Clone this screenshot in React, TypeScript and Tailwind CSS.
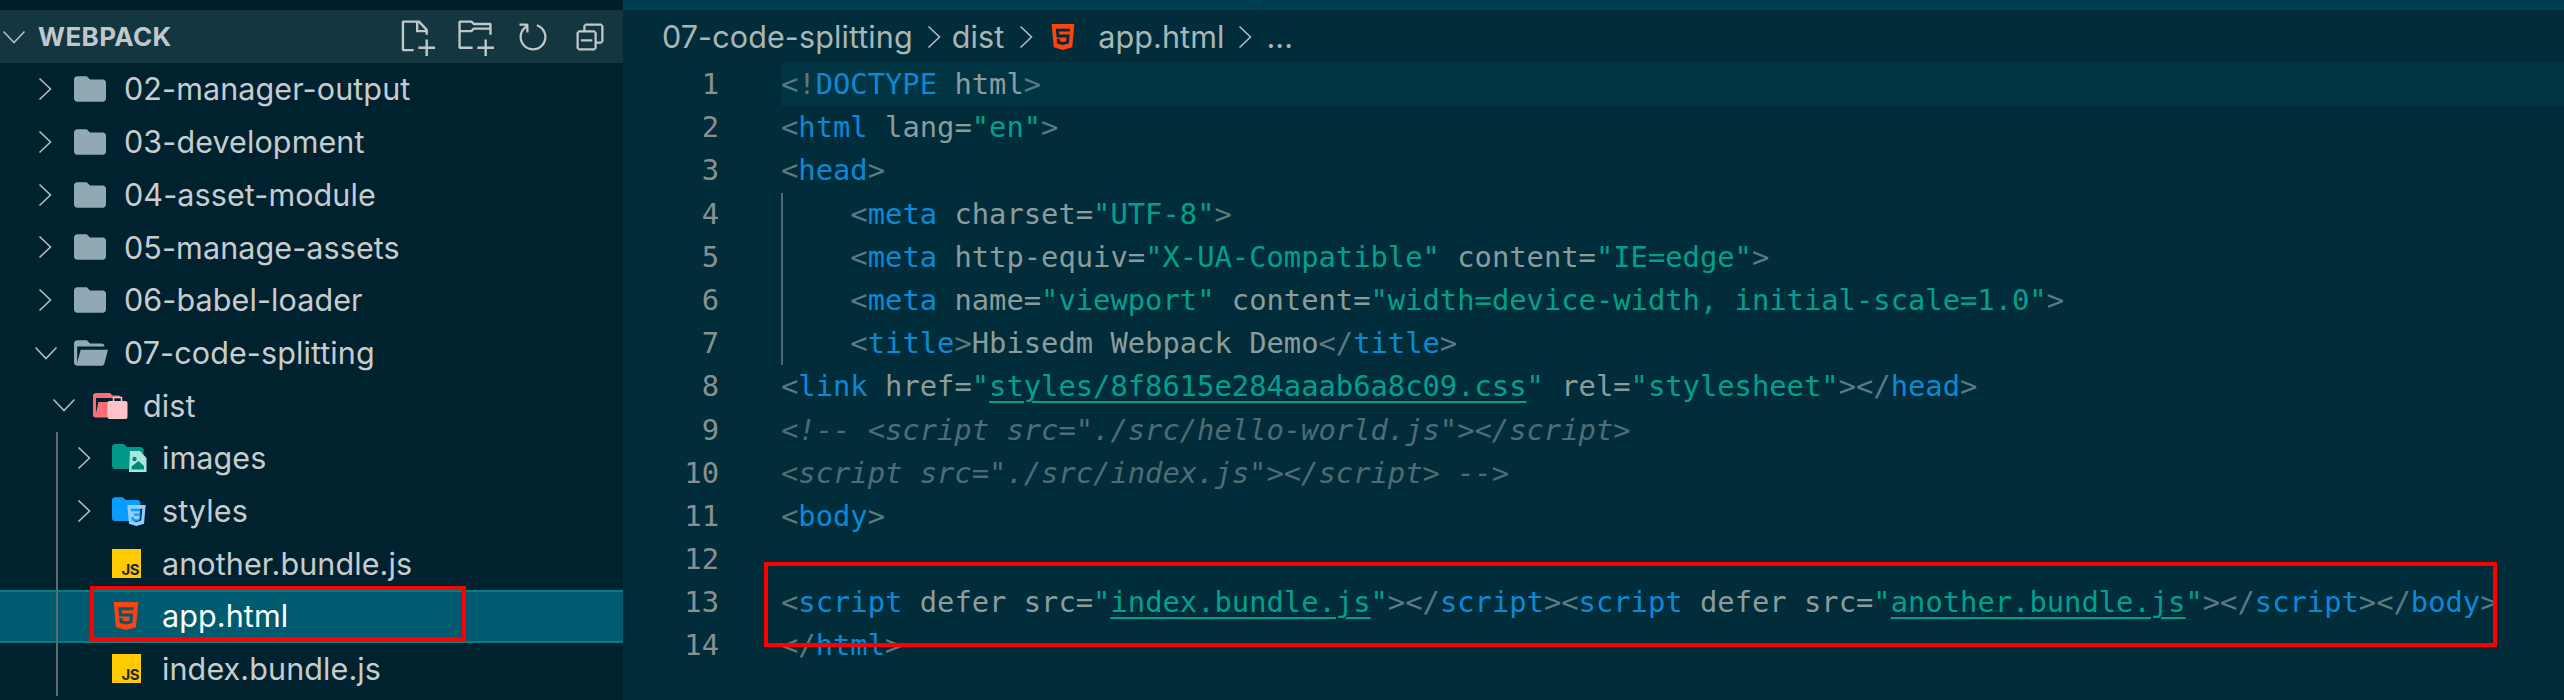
import type { ReactNode } from "react";
import { SiCss3, SiHtml5 } from "react-icons/si";
import { VscCollapseAll, VscNewFile, VscNewFolder, VscRefresh } from "react-icons/vsc";

function ChevronRight({ className = "" }: { className?: string }) {
  return (
    <svg viewBox="0 0 14 24" className={"h-[24px] w-[14px] shrink-0 " + className} fill="none" stroke="#b4bcbe" strokeWidth="1.6">
      <path d="M1.5 1.5 12.5 12 1.5 22.5" />
    </svg>
  );
}

function ChevronDown({ className = "" }: { className?: string }) {
  return (
    <svg viewBox="0 0 24 14" className={"h-[14px] w-[24px] shrink-0 " + className} fill="none" stroke="#b4bcbe" strokeWidth="1.6">
      <path d="M1.5 1.5 12 12.5 22.5 1.5" />
    </svg>
  );
}

function FolderIcon() {
  return (
    <svg viewBox="2 4 20 16" className="h-[26px] w-[32px]" fill="#90a9b4">
      <path d="M10 4H4c-1.11 0-2 .89-2 2v12c0 1.097.903 2 2 2h16c1.097 0 2-.903 2-2V8c0-1.11-.9-2-2-2h-8l-2-2z" />
    </svg>
  );
}

function OpenFolderIcon() {
  return (
    <svg viewBox="2 4 21.2 16" className="h-[26px] w-[34px]" fill="#90a9b4">
      <path d="M19 20H4c-1.11 0-2-.9-2-2V6c0-1.11.89-2 2-2h6l2 2h7a2 2 0 0 1 2 2H4v10l2.14-8h17.07l-2.28 8.5c-.23.87-1.01 1.5-1.93 1.5z" />
    </svg>
  );
}

function DistIcon() {
  return (
    <svg viewBox="0 0 35 28" className="h-[28px] w-[35px]">
      <path fill="#ff6e75" d="M17 2H3C1.4 2 0 3 0 5v19c0 1.5 1.2 2.4 2.6 2.4H16V11H5.5L3 22V7h24.6c0-1.6-1-2.4-2.4-2.4H19.5z" />
      <path fill="#ff6e75" d="M5.5 11H28v4H4.5z" />
      <rect x="14.5" y="10" width="20" height="18" rx="2" fill="#ffc4c9" />
      <path d="M20.5 10V6.6h8V10" fill="none" stroke="#ffc4c9" strokeWidth="1.5" />
    </svg>
  );
}

function ImagesIcon() {
  return (
    <svg viewBox="0 0 35 28" className="h-[28px] w-[35px]">
      <path fill="#009688" d="M12 0H3C1.3 0 0 1.3 0 3v19c0 1.7 1.3 3 3 3h18V7h10.500V6c0-1.500-1.300-3-3-3H15z" />
      <path fill="#009688" d="M20 5h11.500v8H20z" />
      <path fill="#a7e6da" d="M18 7h10l6.500 7v14H17z" />
      <path fill="#00897b" d="M19.500 25.500v-3l7-5.500 5.500 5v3.500z" />
      <circle cx="22.500" cy="15" r="2.200" fill="#00897b" />
    </svg>
  );
}

function StylesIcon() {
  return (
    <div className="relative h-[28px] w-[35px]">
      <svg viewBox="0 0 35 28" className="h-[26px] w-[32px]">
        <path fill="#0a9dff" d="M12 0H3C1.300 0 0 1.300 0 3v20c0 1.700 1.300 3 3 3h25c1.700 0 3-1.300 3-3V6c0-1.700-1.300-3-3-3H15z" />
      </svg>
      <SiCss3 className="absolute right-0 top-[7px] h-[23px] w-[21px] text-[#90d0ff]" />
    </div>
  );
}

function JsIcon() {
  return (
    <div className="flex h-[29px] w-[29px] items-end justify-end bg-[#ffca00] pb-[1px] pr-[2px] font-['Inter',sans-serif] text-[15px] leading-[15px] font-bold tracking-[-0.5px] text-[#1c2a33]">
      JS
    </div>
  );
}

function Html5Icon({ className }: { className: string }) {
  return <SiHtml5 className={className + " text-[#fc4410]"} />;
}

function Row({
  depth,
  chevron,
  icon,
  label,
  selected,
}: {
  depth: number;
  chevron?: "right" | "down";
  icon: ReactNode;
  label: string;
  selected?: boolean;
}) {
  const padding = ["pl-[38px]", "pl-[34px]", "pl-[52px]", "pl-[77px]"][depth];
  return (
    <div
      className={
        "flex h-[52.7px] items-center text-[30.5px] tracking-[0.1px] " +
        padding +
        (selected ? " border-y-[2px] border-[#007f80] bg-[#005a70] text-white" : " text-[#c8ccce]")
      }
    >
      <div className={depth === 3 ? "w-[35px] shrink-0" : depth === 2 ? "w-[41px] shrink-0" : depth === 1 ? "w-[40px] shrink-0" : "w-[36px] shrink-0"}>
        {chevron === "right" && <ChevronRight />}
        {chevron === "down" && <ChevronDown />}
      </div>
      <div className="flex w-[50px] shrink-0 items-center">{icon}</div>
      <span className="whitespace-nowrap">{label}</span>
    </div>
  );
}

const T = ({ children }: { children: ReactNode }) => <span className="text-[#0a8ad4]">{children}</span>;
const P = ({ children }: { children: ReactNode }) => <span className="text-[#5b7a7f]">{children}</span>;
const A = ({ children }: { children: ReactNode }) => <span className="text-[#8b9c9d]">{children}</span>;
const S = ({ children }: { children: ReactNode }) => <span className="text-[#00a08f]">{children}</span>;
const L = ({ children }: { children: ReactNode }) => (
  <span className="text-[#00a08f] underline decoration-[#00a08f] decoration-[2px] underline-offset-[5px]">{children}</span>
);
const C = ({ children }: { children: ReactNode }) => <span className="text-[#4f6c72] italic">{children}</span>;

const lines: ReactNode[] = [
  <><P>&lt;!</P><T>DOCTYPE</T> <A>html</A><P>&gt;</P></>,
  <><P>&lt;</P><T>html</T> <A>lang=</A><S>"en"</S><P>&gt;</P></>,
  <><P>&lt;</P><T>head</T><P>&gt;</P></>,
  <>    <P>&lt;</P><T>meta</T> <A>charset=</A><S>"UTF-8"</S><P>&gt;</P></>,
  <>    <P>&lt;</P><T>meta</T> <A>http-equiv=</A><S>"X-UA-Compatible"</S> <A>content=</A><S>"IE=edge"</S><P>&gt;</P></>,
  <>    <P>&lt;</P><T>meta</T> <A>name=</A><S>"viewport"</S> <A>content=</A><S>"width=device-width, initial-scale=1.0"</S><P>&gt;</P></>,
  <>    <P>&lt;</P><T>title</T><P>&gt;</P><A>Hbisedm Webpack Demo</A><P>&lt;/</P><T>title</T><P>&gt;</P></>,
  <><P>&lt;</P><T>link</T> <A>href=</A><S>"</S><L>styles/8f8615e284aaab6a8c09.css</L><S>"</S> <A>rel=</A><S>"stylesheet"</S><P>&gt;&lt;/</P><T>head</T><P>&gt;</P></>,
  <C>&lt;!-- &lt;script src="./src/hello-world.js"&gt;&lt;/script&gt;</C>,
  <C>&lt;script src="./src/index.js"&gt;&lt;/script&gt; --&gt;</C>,
  <><P>&lt;</P><T>body</T><P>&gt;</P></>,
  <></>,
  <><P>&lt;</P><T>script</T> <A>defer</A> <A>src=</A><S>"</S><L>index.bundle.js</L><S>"</S><P>&gt;&lt;/</P><T>script</T><P>&gt;&lt;</P><T>script</T> <A>defer</A> <A>src=</A><S>"</S><L>another.bundle.js</L><S>"</S><P>&gt;&lt;/</P><T>script</T><P>&gt;&lt;/</P><T>body</T><P>&gt;</P></>,
  <><P>&lt;/</P><T>html</T><P>&gt;</P></>,
];

export default function App() {
  return (
    <div className="relative flex h-[700px] w-[2564px] overflow-hidden bg-[#012c3a] font-['Inter',sans-serif]">
      {/* Explorador */}
      <aside className="relative flex w-[623px] shrink-0 flex-col bg-[#00212e]">
        <div className="h-[10px] shrink-0 bg-[#001e2a]" />
        <div className="flex h-[53px] shrink-0 items-center bg-[#143640] pl-[2px] pr-[15px] text-[#c2c8ca]">
          <ChevronDown />
          <span className="ml-[12px] flex-1 text-[26px] font-bold tracking-[0.4px]">WEBPACK</span>
          <div className="flex items-center gap-[21px]">
            <VscNewFile className="h-[38px] w-[38px]" />
            <VscNewFolder className="h-[38px] w-[38px]" />
            <VscRefresh className="h-[36px] w-[36px]" />
            <VscCollapseAll className="h-[36px] w-[36px]" />
          </div>
        </div>
        <Row depth={0} chevron="right" icon={<FolderIcon />} label="02-manager-output" />
        <Row depth={0} chevron="right" icon={<FolderIcon />} label="03-development" />
        <Row depth={0} chevron="right" icon={<FolderIcon />} label="04-asset-module" />
        <Row depth={0} chevron="right" icon={<FolderIcon />} label="05-manage-assets" />
        <Row depth={0} chevron="right" icon={<FolderIcon />} label="06-babel-loader" />
        <Row depth={1} chevron="down" icon={<OpenFolderIcon />} label="07-code-splitting" />
        <Row depth={2} chevron="down" icon={<DistIcon />} label="dist" />
        <Row depth={3} chevron="right" icon={<ImagesIcon />} label="images" />
        <Row depth={3} chevron="right" icon={<StylesIcon />} label="styles" />
        <Row depth={3} icon={<JsIcon />} label="another.bundle.js" />
        <Row depth={3} icon={<Html5Icon className="h-[32px] w-[28px]" />} label="app.html" selected />
        <Row depth={3} icon={<JsIcon />} label="index.bundle.js" />
        <div className="absolute left-[56px] top-[432px] h-[264px] w-[2px] bg-[#5f6b70]" />
      </aside>

      {/* Editor */}
      <main className="flex min-w-0 flex-1 flex-col">
        <div className="flex h-[10px] shrink-0 bg-[#003f52]">
          <div className="w-[640px] border-r border-[#01303f]" />
        </div>
        <div className="flex h-[53px] shrink-0 items-center pl-[39px] text-[30.5px] tracking-[0.1px] text-[#a9b6b8]">
          <span>07-code-splitting</span>
          <ChevronRight className="ml-[14px]" />
          <span className="ml-[11px]">dist</span>
          <ChevronRight className="ml-[15px]" />
          <Html5Icon className="ml-[17px] h-[30px] w-[26px]" />
          <span className="ml-[22px]">app.html</span>
          <ChevronRight className="ml-[14px]" />
          <span className="ml-[14px]">...</span>
        </div>
        <div className="font-['DejaVu_Sans_Mono',monospace] text-[28.8px]">
          {lines.map((line, i) => (
            <div key={i} className="flex h-[43.2px] items-center leading-[43.2px]">
              <div className="w-[96px] shrink-0 text-right text-[#8a8f90]">{i + 1}</div>
              <div className={"ml-[62px] flex-1 whitespace-pre " + (i === 0 ? "bg-[#013543]" : "")}>{line}</div>
            </div>
          ))}
        </div>
        <div className="absolute left-[781px] top-[193px] h-[172px] w-[2px] bg-[#4d6a72]" />
      </main>

      {/* Marcas rojas */}
      <div className="pointer-events-none absolute left-[90px] top-[586px] h-[55px] w-[376px] border-[4px] border-[#ff0000]" />
      <div className="pointer-events-none absolute left-[764px] top-[562px] h-[85px] w-[1733px] border-[4px] border-[#ff0000]" />
    </div>
  );
}
